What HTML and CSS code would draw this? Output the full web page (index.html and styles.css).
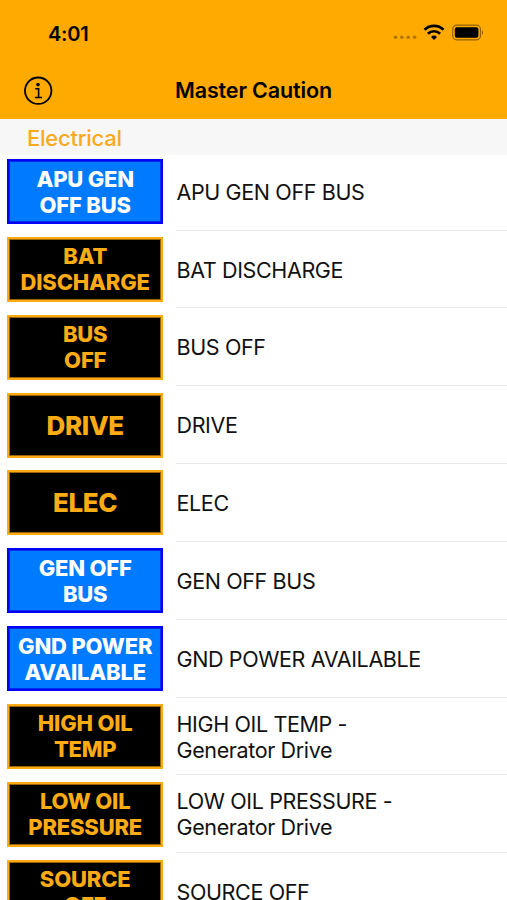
FILE: index.html
```html
<!DOCTYPE html>
<html lang="en">
<head>
<meta charset="utf-8">
<title>Master Caution</title>
<link rel="stylesheet" href="styles.css">
</head>
<body>
<header class="top">
  <div class="status">
    <span class="time">4:01</span>
    <svg class="indicators" width="92" height="20" viewBox="0 0 92 20">
      <g fill="#000" opacity=".3"><circle cx="4.5" cy="14.3" r="1.8"/><circle cx="10.8" cy="14.3" r="1.8"/><circle cx="17.2" cy="14.3" r="1.8"/><circle cx="23.6" cy="14.3" r="1.8"/></g>
      <g fill="none" stroke="#000" stroke-width="2.7"><path d="M33.5 6.7a13.6 13.6 0 0 1 19 0"/><path d="M36.9 10.8a8.6 8.6 0 0 1 12.2 0"/></g>
      <path d="M43 17l-3-3.1a4.3 4.3 0 0 1 6 0z"/>
      <rect x="61.7" y="2.2" width="27.8" height="14.6" rx="4" fill="none" stroke="#000" stroke-opacity=".42" stroke-width="1.2"/>
      <rect x="63.8" y="4.3" width="23.6" height="10.4" rx="2"/>
      <path d="M91 7.5v4q1.3-.6 1.3-2T91 7.5z" opacity=".45"/>
    </svg>
  </div>
  <div class="nav">
    <svg class="info" width="30" height="30" viewBox="0 0 30 30">
      <circle cx="15.2" cy="14.7" r="13.2" fill="none" stroke="#000" stroke-width="1.8"/>
      <circle cx="15" cy="8.6" r="1.8"/>
      <path d="M12.2 12.8h3.4v8.6M11.9 21.5h7.2" fill="none" stroke="#000" stroke-width="1.6"/>
    </svg>
    <h1 class="title">Master Caution</h1>
  </div>
</header>
<h2 class="section">Electrical</h2>
<ul class="list">
  <li class="row"><div class="light blue">APU GEN<br>OFF BUS</div><div class="label">APU GEN OFF BUS</div></li>
  <li class="row"><div class="light">BAT<br>DISCHARGE</div><div class="label">BAT DISCHARGE</div></li>
  <li class="row"><div class="light">BUS<br>OFF</div><div class="label">BUS OFF</div></li>
  <li class="row"><div class="light single">DRIVE</div><div class="label">DRIVE</div></li>
  <li class="row"><div class="light single">ELEC</div><div class="label">ELEC</div></li>
  <li class="row"><div class="light blue">GEN OFF<br>BUS</div><div class="label">GEN OFF BUS</div></li>
  <li class="row"><div class="light blue">GND POWER<br>AVAILABLE</div><div class="label">GND POWER AVAILABLE</div></li>
  <li class="row"><div class="light">HIGH OIL<br>TEMP</div><div class="label">HIGH OIL TEMP -<br>Generator Drive</div></li>
  <li class="row"><div class="light">LOW OIL<br>PRESSURE</div><div class="label">LOW OIL PRESSURE -<br>Generator Drive</div></li>
  <li class="row"><div class="light">SOURCE<br>OFF</div><div class="label">SOURCE OFF</div></li>
</ul>
</body>
</html>
```
FILE: styles.css
```css
* { box-sizing: border-box; }
html, body { height: 100%; }
body {
  margin: 0;
  overflow: hidden;
  background: #fff;
  color: #111;
  font-family: Inter, "Liberation Sans", sans-serif;
}
.top {
  height: 119px;
  background: #ffaa00;
  color: #000;
}
.status {
  height: 62px;
  padding: 5px 24.5px 0 48px;
  display: flex;
  align-items: center;
  justify-content: space-between;
}
.time {
  padding-top: 1px;
  font-size: 20px;
  font-weight: 600;
  letter-spacing: -0.2px;
}
.indicators { margin-top: -1px; }
.nav {
  height: 57px;
  padding: 0 23px;
  display: grid;
  grid-template-columns: 30px 1fr 30px;
  align-items: center;
}
.title {
  margin: -2px 0 0;
  text-align: center;
  font-size: 21.5px;
  font-weight: 600;
  letter-spacing: -0.13px;
}
.section {
  height: 36px;
  margin: 0;
  padding-left: 27px;
  background: #f7f7f7;
  color: #f9a91e;
  font-size: 22px;
  font-weight: 500;
  line-height: 38px;
  letter-spacing: -0.25px;
}
.list {
  margin: -2.2px 0 0;
  padding: 0;
  list-style: none;
}
.row {
  height: 77.83px;
  padding-left: 7.4px;
  display: flex;
}
.light {
  width: 155.6px;
  height: 65px;
  margin: 6.3px 13.5px 0 0;
  border: 2px solid #fbab14;
  background: #000;
  color: #fbab14;
  box-shadow: inset 0 0 0 1px #9a6508;
  display: grid;
  align-content: center;
  text-align: center;
  font-size: 22px;
  font-weight: 800;
  line-height: 26px;
  letter-spacing: -0.2px;
  white-space: nowrap;
}
.single {
  padding-top: 1px;
  font-size: 26px;
  letter-spacing: -0.4px;
}
.blue {
  border-color: #0000f5;
  background: #007aff;
  color: #fff;
  box-shadow: inset 0 0 0 1px #0030ee;
}
.label {
  flex: 1;
  display: flex;
  flex-direction: column;
  justify-content: center;
  padding-top: 1.2px;
  border-bottom: 1.5px solid #e9e9ea;
  font-size: 21.5px;
  line-height: 26px;
  letter-spacing: -0.37px;
}
```
